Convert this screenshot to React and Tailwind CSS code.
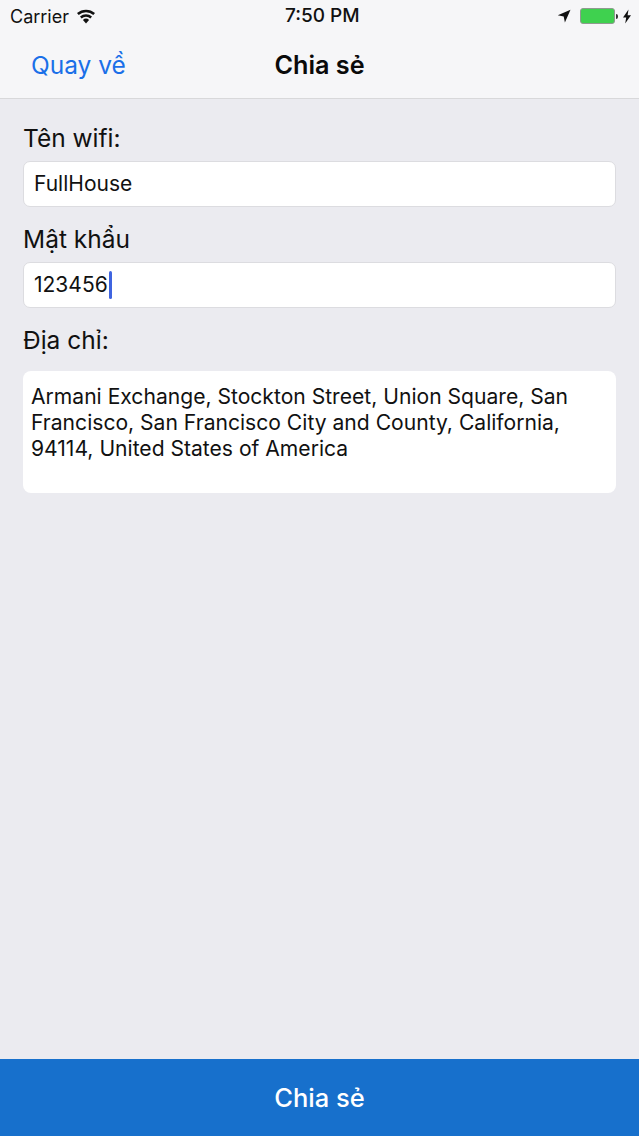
import React from 'react';

const font = { fontFamily: 'Inter, "Noto Sans", sans-serif' };

const WifiIcon = () => (
  <svg width="20" height="15" viewBox="0 0 20 15" fill="#111">
    <path d="M10 14.5 6.9 10.9a4.8 4.8 0 0 1 6.2 0Z" />
    <path d="M5.6 9.4 4 7.5a9.2 9.2 0 0 1 12 0l-1.6 1.9a6.8 6.8 0 0 0-8.8 0Z" />
    <path d="M2.7 6 1 4.1a13.6 13.6 0 0 1 18 0L17.3 6a11.2 11.2 0 0 0-14.6 0Z" />
  </svg>
);

const StatusBar = () => (
  <div className="relative flex h-8 items-center justify-between pl-[10px] pr-[7px] text-[18px] text-[#111]">
    <div className="flex items-center gap-[7px]">
      <span>Carrier</span>
      <WifiIcon />
    </div>
    <span className="absolute left-[285px] top-[2px] text-[19px] font-medium">7:50 PM</span>
    <div className="flex items-center">
      <svg width="14" height="14" viewBox="0 0 14 14" fill="#111" className="mr-[9px]">
        <path d="M13.5 0.8 0.8 6.3l5.9 1.1 1.2 6Z" />
      </svg>
      <div className="h-[16px] w-[35px] rounded-[3px] border border-[#8f9a8f] bg-[#3fd14f]" />
      <div className="ml-[1px] h-[5px] w-[2px] rounded-r-sm bg-[#333]" />
      <svg width="10" height="15" viewBox="0 0 10 15" fill="#111" className="ml-[4px]">
        <path d="M6.5 0.5 1 8.4h3.2L3.2 14.5 9 6.2H5.6Z" />
      </svg>
    </div>
  </div>
);

const Field = ({ label, children }) => (
  <div>
    <div className="h-[30px] text-[24.5px] leading-[30px] text-[#111]">{label}</div>
    <div className="mt-2 flex h-[46px] items-center rounded-[7px] border border-[#dcdce0] bg-white pb-[1px] pl-[10px] text-[21px] text-[#111]">
      {children}
    </div>
  </div>
);

const App = () => {
  return (
    <div className="flex h-[1136px] w-[639px] flex-col overflow-hidden bg-[#ebebf0]" style={font}>
      <header className="h-[99px] border-b border-[#d8d8da] bg-[#f6f6f8]">
        <StatusBar />
        <div className="relative flex h-[66px] items-center justify-center pt-[2px]">
          <span className="absolute left-[31px] top-[15px] text-[24.5px] text-[#1a6fe8]">Quay về</span>
          <span className="text-[25.2px] font-semibold text-[#0a0a0a]">Chia sẻ</span>
        </div>
      </header>

      <main className="flex flex-1 flex-col gap-[17px] px-[23px] pt-6">
        <Field label="Tên wifi:">FullHouse</Field>
        <Field label="Mật khẩu">
          <span>123456</span>
          <span className="ml-[1px] h-[28px] w-[3px] rounded-sm bg-[#3f64e0]" />
        </Field>
        <div>
          <div className="h-[30px] text-[24.5px] leading-[30px] text-[#111]">Địa chỉ:</div>
          <p className="mt-4 h-[122px] w-[593px] rounded-[8px] bg-white px-2 pt-[13px] text-[21.1px] leading-[26px] text-[#111]">
            Armani Exchange, Stockton Street, Union Square, San Francisco, San Francisco City and County, California, 94114, United States of America
          </p>
        </div>
      </main>

      <footer className="flex h-[77px] items-center justify-center bg-[#1770cc] pt-[2px] text-[25.5px] font-medium text-white">
        Chia sẻ
      </footer>
    </div>
  );
};

export default App;
